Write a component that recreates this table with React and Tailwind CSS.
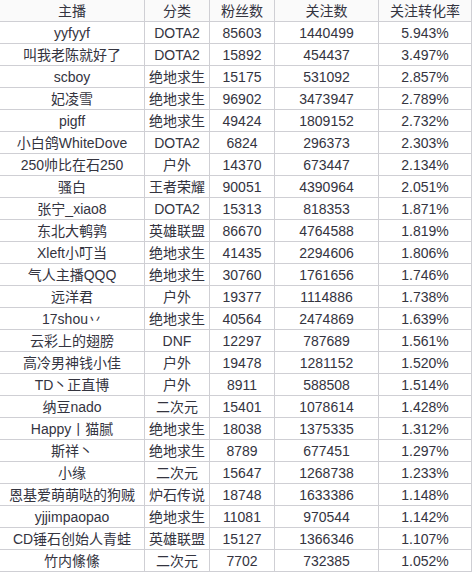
import React from "react";

const rows = [
  ["yyfyyf", "DOTA2", "85603", "1440499", "5.943%"],
  ["叫我老陈就好了", "DOTA2", "15892", "454437", "3.497%"],
  ["scboy", "绝地求生", "15175", "531092", "2.857%"],
  ["妃凌雪", "绝地求生", "96902", "3473947", "2.789%"],
  ["pigff", "绝地求生", "49424", "1809152", "2.732%"],
  ["小白鸽WhiteDove", "DOTA2", "6824", "296373", "2.303%"],
  ["250帅比在石250", "户外", "14370", "673447", "2.134%"],
  ["骚白", "王者荣耀", "90051", "4390964", "2.051%"],
  ["张宁_xiao8", "DOTA2", "15313", "818353", "1.871%"],
  ["东北大鹌鹑", "英雄联盟", "86670", "4764588", "1.819%"],
  ["Xleft小叮当", "绝地求生", "41435", "2294606", "1.806%"],
  ["气人主播QQQ", "绝地求生", "30760", "1761656", "1.746%"],
  ["远洋君", "户外", "19377", "1114886", "1.738%"],
  ["17shou丷", "绝地求生", "40564", "2474869", "1.639%"],
  ["云彩上的翅膀", "DNF", "12297", "787689", "1.561%"],
  ["高冷男神钱小佳", "户外", "19478", "1281152", "1.520%"],
  ["TD丶正直博", "户外", "8911", "588508", "1.514%"],
  ["纳豆nado", "二次元", "15401", "1078614", "1.428%"],
  ["Happy丨猫腻", "绝地求生", "18038", "1375335", "1.312%"],
  ["斯祥丶", "绝地求生", "8789", "677451", "1.297%"],
  ["小缘", "二次元", "15647", "1268738", "1.233%"],
  ["恩基爱萌萌哒的狗贼", "炉石传说", "18748", "1633386", "1.148%"],
  ["yjjimpaopao", "绝地求生", "11081", "970544", "1.142%"],
  ["CD锤石创始人青蛙", "英雄联盟", "15127", "1366346", "1.107%"],
  ["竹内絛絛", "二次元", "7702", "732385", "1.052%"],
];

const head = ["主播", "分类", "粉丝数", "关注数", "关注转化率"];

const Cell = ({ children }) => (
  <div className="h-[22px] border-r border-b border-[#cfcfd4] flex items-center justify-center leading-none whitespace-nowrap overflow-hidden">
    {children}
  </div>
);

const App = () => {
  return (
    <div
      className="w-[472px] h-[572px] overflow-hidden bg-white text-[#34343f] text-[14px]"
      style={{ fontFamily: '"Liberation Sans", "Noto Sans CJK SC", sans-serif' }}
    >
      <div className="grid grid-cols-[145px_65px_65px_104px_93px] bg-[#fafafa]">
        {head.map((h) => (
          <Cell key={h}>{h}</Cell>
        ))}
      </div>
      {rows.map((r, i) => (
        <div key={i} className="grid grid-cols-[145px_65px_65px_104px_93px]">
          {r.map((c, j) => (
            <Cell key={j}>{c}</Cell>
          ))}
        </div>
      ))}
    </div>
  );
};

export default App;
